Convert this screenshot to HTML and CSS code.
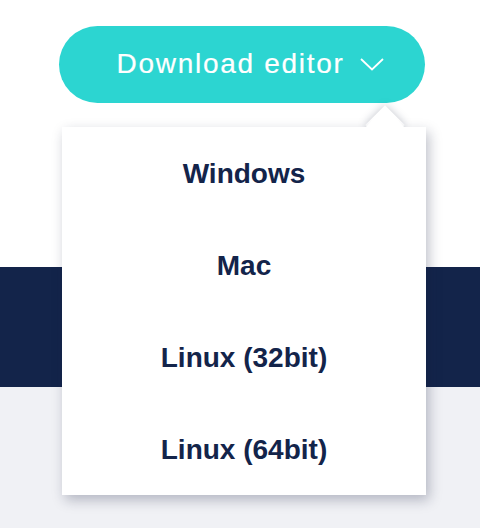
FILE: index.html
```html
<!DOCTYPE html>
<html>
<head>
<meta charset="utf-8">
<link rel="stylesheet" href="styles.css">
</head>
<body>
<div class="page">
  <section class="hero">
    <div class="dropdown">
      <button class="dl-btn" type="button">
        <span class="dl-label">Download editor</span>
        <svg class="chev" width="24" height="13" viewBox="0 0 24 13"><polyline points="1,1 12,11.5 23,1" fill="none" stroke="#fff" stroke-width="1.8"/></svg>
      </button>
      <div class="menu">
        <div class="arrow-shadow"></div>
        <ul class="menu-list">
          <li class="menu-item">Windows</li>
          <li class="menu-item">Mac</li>
          <li class="menu-item">Linux (32bit)</li>
          <li class="menu-item">Linux (64bit)</li>
        </ul>
        <div class="arrow-cover"></div>
      </div>
    </div>
  </section>
  <section class="band"></section>
  <section class="rest"></section>
</div>
</body>
</html>
```
FILE: styles.css
```css
html, body {
  margin: 0;
  padding: 0;
}
body {
  background: #f0f1f5;
  font-family: "Liberation Sans", Arial, sans-serif;
}
.page {
  display: flex;
  flex-direction: column;
  min-height: 528px;
}
.hero {
  background: #fff;
  height: 267px;
  padding-top: 26px;
  box-sizing: border-box;
  display: flex;
  justify-content: center;
}
.band {
  background: #13244a;
  height: 120px;
}
.rest {
  flex: 1;
  background: #f0f1f5;
}
.dropdown {
  position: relative;
  margin-left: 4px;
  height: 77px;
}
.dl-btn {
  width: 366px;
  height: 77px;
  border: none;
  border-radius: 39px;
  background: #2cd5d1;
  color: #fff;
  display: flex;
  align-items: center;
  justify-content: center;
  gap: 16px;
  padding: 0 0 0 17px;
  font-family: "Liberation Sans", Arial, sans-serif;
  font-size: 28px;
  letter-spacing: 1.7px;
  -webkit-text-stroke: 0.2px #fff;
  cursor: pointer;
}
.dl-label {
  line-height: 1;
  margin-top: -1px;
}
.chev {
  display: block;
  margin-top: -1px;
}
.menu {
  position: absolute;
  top: 101px;
  left: 3px;
  width: 364px;
  z-index: 5;
}
.arrow-shadow {
  position: absolute;
  width: 28px;
  height: 28px;
  left: 309px;
  top: -16px;
  background: #fff;
  transform: rotate(45deg);
  box-shadow: 0 0 8px rgba(20, 30, 60, 0.26);
}
.menu-list {
  position: relative;
  list-style: none;
  margin: 0;
  padding: 0;
  background: #fff;
  box-shadow: 3px 5px 12px rgba(20, 30, 60, 0.28);
}
.arrow-cover {
  position: absolute;
  left: 303px;
  top: -21px;
  width: 40px;
  height: 22px;
  background: #fff;
  clip-path: polygon(50% 3%, 100% 100%, 0 100%);
}
.menu-item {
  height: 92px;
  display: flex;
  align-items: center;
  justify-content: center;
  padding-top: 1px;
  box-sizing: border-box;
  font-size: 28px;
  font-weight: 700;
  color: #13244a;
}
```
